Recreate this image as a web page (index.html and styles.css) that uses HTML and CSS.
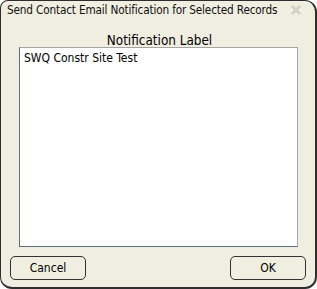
FILE: index.html
```html
<!DOCTYPE html>
<html>
<head>
<meta charset="utf-8">
<link rel="stylesheet" href="styles.css">
</head>
<body>
<div class="window">
  <div class="titlebar">
    <span class="title">Send Contact Email Notification for Selected Records</span>
    <svg class="close" width="10" height="10" viewBox="0 0 10 10">
      <path d="M1 1 L9 9 M9 1 L1 9" stroke="#b8b8b0" stroke-width="2.2" fill="none"/>
      <path d="M1 1 L9 9 M9 1 L1 9" stroke="#f4f3ea" stroke-width="0.8" fill="none"/>
    </svg>
  </div>
  <div class="content">
    <div class="label">Notification Label</div>
    <div class="textbox">SWQ Constr Site Test</div>
    <div class="buttons">
      <button class="btn">Cancel</button>
      <button class="btn">OK</button>
    </div>
  </div>
</div>
</body>
</html>
```
FILE: styles.css
```css
html, body {
  margin: 0;
  padding: 0;
  background: #ffffff;
}
.window {
  box-sizing: border-box;
  width: 317px;
  height: 289px;
  background: #efeee0;
  border: 1px solid #2e2e2e;
  border-right-width: 2px;
  border-bottom-width: 2px;
  border-radius: 8px 12px 12px 12px;
  font-family: "DejaVu Sans Condensed", "DejaVu Sans", sans-serif;
  font-size: 12px;
  color: #000;
  display: flex;
  flex-direction: column;
}
.titlebar {
  display: flex;
  align-items: center;
  justify-content: space-between;
  height: 17px;
  padding: 0 14px 0 6px;
}
.title {
  white-space: nowrap;
  font-size: 11.7px;
  letter-spacing: -0.16px;
  color: #111;
}
.close {
  display: block;
}
.content {
  display: flex;
  flex-direction: column;
  padding: 14px 17px 0 18px;
}
.label {
  text-align: center;
  height: 15px;
  line-height: 17px;
  font-size: 13.4px;
  padding-left: 2px;
}
.textbox {
  box-sizing: border-box;
  height: 200px;
  background: #fff;
  border: 1px solid #5d6e7d;
  border-top-color: #a4a4a4;
  border-right-color: #a8a8a8;
  padding: 3px 4px;
  line-height: 14px;
}
.buttons {
  display: flex;
  justify-content: space-between;
  margin: 9px -8px 0 -9px;
}
.btn {
  box-sizing: border-box;
  width: 76px;
  height: 24px;
  background: #efeee0;
  border: 1px solid #333;
  border-radius: 5px;
  font-family: inherit;
  font-size: 12px;
  color: #000;
  padding: 0;
}
```
